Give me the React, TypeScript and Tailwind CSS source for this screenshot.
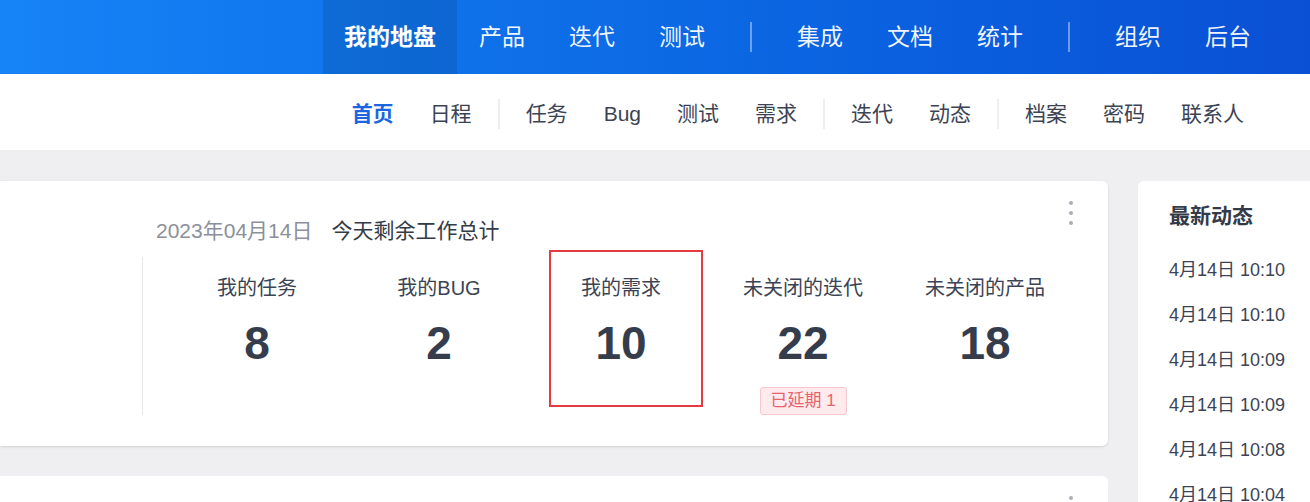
import React from 'react';

const topNav = [
  ['我的地盘', '产品', '迭代', '测试'],
  ['集成', '文档', '统计'],
  ['组织', '后台'],
];

const subNav = [
  ['首页', '日程'],
  ['任务', 'Bug', '测试', '需求'],
  ['迭代', '动态'],
  ['档案', '密码', '联系人'],
];

const stats = [
  { label: '我的任务', value: '8' },
  { label: '我的BUG', value: '2' },
  { label: '我的需求', value: '10' },
  { label: '未关闭的迭代', value: '22', delayed: 1 },
  { label: '未关闭的产品', value: '18' },
];

const times = ['4月14日 10:10', '4月14日 10:10', '4月14日 10:09', '4月14日 10:09', '4月14日 10:08', '4月14日 10:04'];

const MoreDots = () => (
  <div className="flex flex-col gap-[6px]">
    <span className="w-[4px] h-[4px] rounded-full bg-[#a9adb6]" />
    <span className="w-[4px] h-[4px] rounded-full bg-[#a9adb6]" />
    <span className="w-[4px] h-[4px] rounded-full bg-[#a9adb6]" />
  </div>
);

export default function App() {
  return (
    <div
      className="w-[1310px] h-[502px] overflow-hidden bg-[#efeff2]"
      style={{ fontFamily: '"Liberation Sans", "Noto Sans CJK SC", sans-serif' }}
    >
      {/* main header */}
      <header className="h-[74px] flex justify-end items-stretch pr-[37px] bg-gradient-to-r from-[#1683f6] to-[#0a50d4]">
        {topNav.map((group, gi) => (
          <React.Fragment key={gi}>
            {gi > 0 && <div className="self-center w-[2px] h-[30px] mx-[23px] bg-white/40" />}
            {group.map((item) => {
              const active = item === '我的地盘';
              return (
                <div
                  key={item}
                  className={
                    active
                      ? 'flex items-center px-[21px] text-[23px] font-bold text-white bg-black/10'
                      : 'flex items-center px-[22px] text-[23px] text-white/95'
                  }
                >
                  {item}
                </div>
              );
            })}
          </React.Fragment>
        ))}
      </header>

      {/* sub navigation */}
      <nav className="h-[76px] flex justify-end items-center pt-[3px] pr-[48px] bg-white">
        {subNav.map((group, gi) => (
          <React.Fragment key={gi}>
            {gi > 0 && <div className="w-[2px] h-[30px] mx-[8px] bg-[#eceef2]" />}
            {group.map((item) => {
              const active = item === '首页';
              return (
                <div
                  key={item}
                  className={
                    active
                      ? 'px-[18px] text-[21px] font-bold text-[#1b66e0]'
                      : 'px-[18px] text-[21px] text-[#3b4354]'
                  }
                >
                  {item}
                </div>
              );
            })}
          </React.Fragment>
        ))}
      </nav>

      {/* content */}
      <div className="flex gap-[30px] pt-[31px]">
        <div className="w-[1108px] shrink-0 flex flex-col gap-[30px]">
          <div className="relative h-[265px] bg-white rounded-r-md shadow-sm pl-[142px] pt-[17px]">
            <div className="absolute top-[20px] right-[35px]">
              <MoreDots />
            </div>

            <div className="pl-[14px] h-[28px] leading-[28px] text-[21px] mt-[19px]">
              <span className="text-[#8b909a]">2023年04月14日</span>
              <span className="ml-[19px] text-[#333a48]">今天剩余工作总计</span>
            </div>

            <div className="mt-[12px] h-[158px] border-l border-[#e8e9ec] flex pl-[23px]">
              {stats.map((s) => (
                <div key={s.label} className="w-[182px] flex flex-col items-center pt-[17px]">
                  <div className="h-[28px] leading-[28px] text-[20px] text-[#3b4354]">{s.label}</div>
                  <div className="mt-[15px] h-[52px] leading-[52px] text-[46px] font-bold text-[#353c4c]">
                    {s.value}
                  </div>
                  {s.delayed && (
                    <div className="mt-[18px] w-[87px] h-[29px] flex items-center justify-center rounded-[3px] border border-[#f8c7ce] bg-[#ffebee] text-[17px] text-[#e6646c]">
                      已延期 {s.delayed}
                    </div>
                  )}
                </div>
              ))}
            </div>

            {/* highlight annotation */}
            <div className="absolute left-[549px] top-[69px] w-[154px] h-[157px] border-2 border-[#e53a3f]" />
          </div>

          <div className="relative h-[60px] bg-white rounded-tr-md">
            <div className="absolute top-[20px] right-[35px]">
              <MoreDots />
            </div>
          </div>
        </div>

        <div className="w-[220px] shrink-0 h-[330px] bg-white rounded-tl-md pl-[31px] pt-[21px]">
          <div className="h-[28px] leading-[28px] text-[21px] font-bold text-[#333a48]">最新动态</div>
          <div className="mt-[18px]">
            {times.map((t, i) => (
              <div key={i} className="h-[45px] leading-[45px] text-[18px] text-[#3b4354]">
                {t}
              </div>
            ))}
          </div>
        </div>
      </div>
    </div>
  );
}
